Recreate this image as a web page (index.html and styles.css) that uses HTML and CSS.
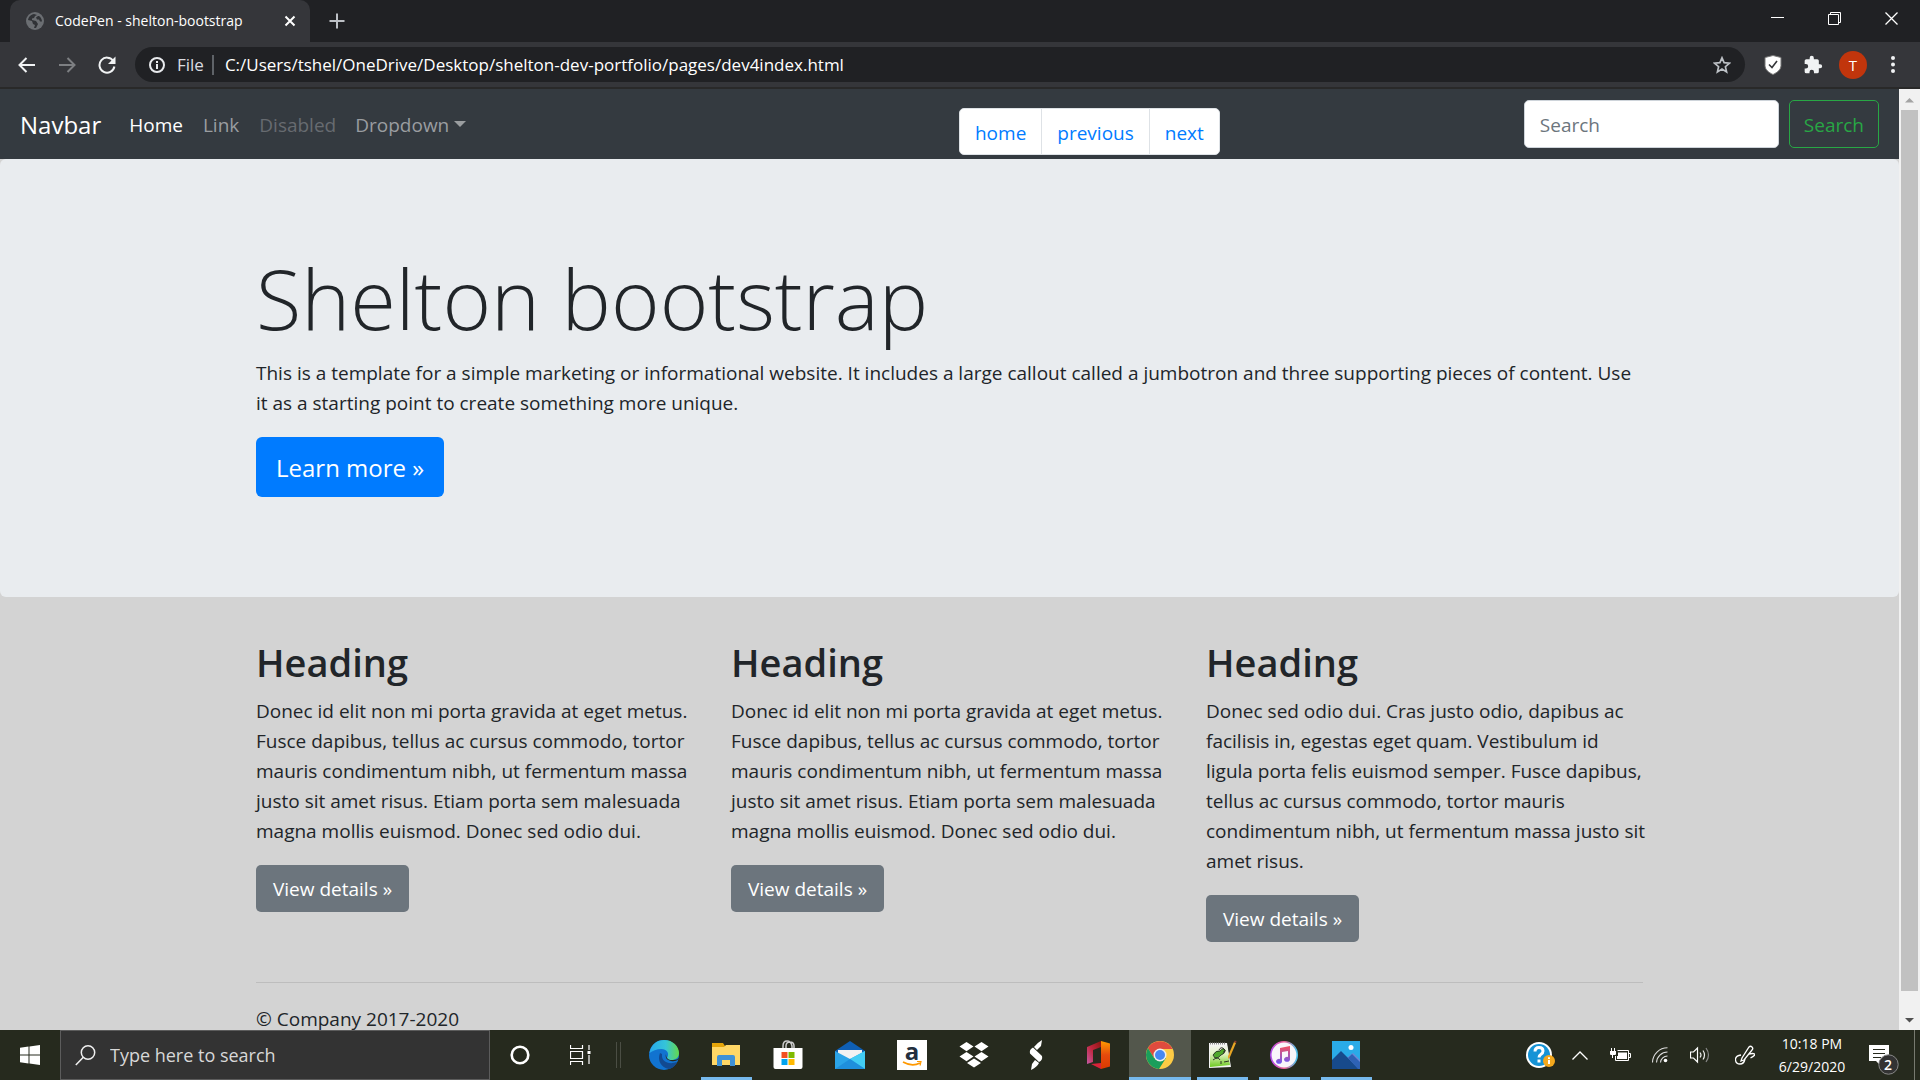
FILE: index.html
```html
<!DOCTYPE html>
<html lang="en">
<head>
<meta charset="utf-8">
<title>CodePen - shelton-bootstrap</title>
<link rel="stylesheet" href="styles.css">
</head>
<body>
<div class="screen">
  <header class="tabstrip">
    <div class="tab">
      <svg class="favicon" viewBox="0 0 18 18"><circle cx="9" cy="9" r="9" fill="#6b6e72"/><path d="M8 2c-3 .3-5.500 3-6 6l4 1 1 3 2 1-1 3 2 0 2-4-2-3-4-1 0-1.500 2-.5 1-2 2-1zM12 4l-2 1.500 1 2 2 0 1 2 2 0c0-2-1.200-4.500-3-5.500z" fill="#303236"/></svg>
      <span class="tab-title">CodePen - shelton-bootstrap</span>
      <button class="icon-btn tab-close" aria-label="Close tab"><svg width="12" height="12" viewBox="0 0 12 12"><path d="M1.500 1.500l9 9m0-9l-9 9" stroke="#fff" stroke-width="2"/></svg></button>
    </div>
    <button class="icon-btn new-tab" aria-label="New tab"><svg width="16" height="16" viewBox="0 0 16 16"><path d="M8 .5v15M.5 8h15" stroke="#bdc1c6" stroke-width="2"/></svg></button>
    <div class="window-controls">
      <button class="icon-btn" aria-label="Minimize"><svg width="13" height="15" viewBox="0 0 13 15"><path d="M0 6.500h13" stroke="#fff"/></svg></button>
      <button class="icon-btn" aria-label="Restore"><svg width="13" height="13" viewBox="0 0 13 13"><path d="M.5 2.500h10v10h-10zM2.500 2.500v-2h10v10h-2" fill="none" stroke="#fff"/></svg></button>
      <button class="icon-btn" aria-label="Close"><svg width="13" height="13" viewBox="0 0 13 13"><path d="M.5 .5l12 12m0-12l-12 12" stroke="#fff" stroke-width="1.300"/></svg></button>
    </div>
  </header>

  <div class="toolbar">
    <button class="icon-btn nav-btn" aria-label="Back"><svg width="18" height="16" viewBox="0 0 18 16"><path d="M17 8H2M8.500 1L1.500 8l7 7" fill="none" stroke="#f1f3f4" stroke-width="2"/></svg></button>
    <button class="icon-btn nav-btn" aria-label="Forward"><svg width="18" height="16" viewBox="0 0 18 16"><path d="M1 8h15M9.500 1l7 7-7 7" fill="none" stroke="#7d7f82" stroke-width="2"/></svg></button>
    <button class="icon-btn nav-btn" aria-label="Reload"><svg width="18" height="18" viewBox="0 0 18 18"><path d="M15.300 5A7.500 7.500 0 1 0 16.400 10.500" fill="none" stroke="#f1f3f4" stroke-width="2"/><path d="M17.500 .5v7.500H10z" fill="#f1f3f4"/></svg></button>
    <div class="omnibox">
      <svg width="16" height="16" viewBox="0 0 16 16"><circle cx="8" cy="8" r="7" fill="none" stroke="#e8eaed" stroke-width="2"/><path d="M8 7v5M8 4v2" stroke="#e8eaed" stroke-width="2"/></svg>
      <span class="scheme">File</span>
      <input class="url" aria-label="Address" value="C:/Users/tshel/OneDrive/Desktop/shelton-dev-portfolio/pages/dev4index.html">
      <svg width="18" height="18" viewBox="0 0 18 18"><path d="M9 1.800l2.100 4.900 5.300.5-4 3.500 1.200 5.200L9 13.100l-4.600 2.800 1.200-5.200-4-3.500 5.300-.5z" fill="none" stroke="#bdc1c6" stroke-width="1.700"/></svg>
    </div>
    <div class="extensions">
      <button class="icon-btn ext" aria-label="Shield extension"><svg width="18" height="20" viewBox="0 0 18 20"><path d="M9 .5l8 2v8c0 4-3.500 7-8 9-4.500-2-8-5-8-9v-8z" fill="#fff" stroke="#777" stroke-width="1"/><path d="M5 9.500l3 3 5-6.500" fill="none" stroke="#35363a" stroke-width="1.600"/></svg></button>
      <button class="icon-btn ext" aria-label="Extensions"><svg width="20" height="20" viewBox="0 0 24 24"><path d="M20.500 11H19V7a2 2 0 0 0-2-2h-4V3.500a2.500 2.500 0 0 0-5 0V5H4a2 2 0 0 0-2 2v3.800h1.500a2.700 2.700 0 0 1 0 5.400H2V20a2 2 0 0 0 2 2h3.800v-1.500a2.700 2.700 0 0 1 5.400 0V22H17a2 2 0 0 0 2-2v-4h1.500a2.500 2.500 0 0 0 0-5z" fill="#f1f3f4"/></svg></button>
      <button class="avatar">T</button>
      <button class="icon-btn ext" aria-label="Menu"><svg width="4" height="17" viewBox="0 0 4 17"><g fill="#f1f3f4"><circle cx="2" cy="2" r="2"/><circle cx="2" cy="8.500" r="2"/><circle cx="2" cy="15" r="2"/></g></svg></button>
    </div>
  </div>

  <div class="viewport">
    <div class="page">
      <nav class="navbar">
        <a class="brand" href="#">Navbar</a>
        <ul class="nav-list">
          <li><a class="nav-link active" href="#">Home</a></li>
          <li><a class="nav-link" href="#">Link</a></li>
          <li><a class="nav-link disabled" href="#">Disabled</a></li>
          <li><a class="nav-link dropdown" href="#">Dropdown</a></li>
        </ul>
        <ul class="pagination">
          <li><a href="#">home</a></li>
          <li><a href="#">previous</a></li>
          <li><a href="#">next</a></li>
        </ul>
        <form class="search-form">
          <input class="search-input" type="text" placeholder="Search" aria-label="Search">
          <button class="search-btn" type="button">Search</button>
        </form>
      </nav>
      <main>
        <section class="jumbotron">
          <div class="container">
            <h1>Shelton bootstrap</h1>
            <p>This is a template for a simple marketing or informational website. It includes a large callout called a jumbotron and three supporting pieces of content. Use it as a starting point to create something more unique.</p>
            <a class="btn btn-primary" href="#">Learn more »</a>
          </div>
        </section>
        <div class="container">
          <div class="row">
            <section class="col">
              <h2>Heading</h2>
              <p>Donec id elit non mi porta gravida at eget metus. Fusce dapibus, tellus ac cursus commodo, tortor mauris condimentum nibh, ut fermentum massa justo sit amet risus. Etiam porta sem malesuada magna mollis euismod. Donec sed odio dui.</p>
              <a class="btn btn-secondary" href="#">View details »</a>
            </section>
            <section class="col">
              <h2>Heading</h2>
              <p>Donec id elit non mi porta gravida at eget metus. Fusce dapibus, tellus ac cursus commodo, tortor mauris condimentum nibh, ut fermentum massa justo sit amet risus. Etiam porta sem malesuada magna mollis euismod. Donec sed odio dui.</p>
              <a class="btn btn-secondary" href="#">View details »</a>
            </section>
            <section class="col">
              <h2>Heading</h2>
              <p>Donec sed odio dui. Cras justo odio, dapibus ac facilisis in, egestas eget quam. Vestibulum id ligula porta felis euismod semper. Fusce dapibus, tellus ac cursus commodo, tortor mauris condimentum nibh, ut fermentum massa justo sit amet risus.</p>
              <a class="btn btn-secondary" href="#">View details »</a>
            </section>
          </div>
          <footer class="footer"><p>© Company 2017-2020</p></footer>
        </div>
      </main>
    </div>
    <div class="scrollbar">
      <svg class="arrow" viewBox="0 0 21 21"><path d="M6 13.500h9L10.500 9z" fill="#a3a3a3"/></svg>
      <div class="track"><div class="thumb"></div></div>
      <svg class="arrow" viewBox="0 0 21 21"><path d="M6 9h9l-4.500 4.500z" fill="#505050"/></svg>
    </div>
  </div>

  <footer class="taskbar">
    <button class="icon-btn start" aria-label="Start"><svg width="20" height="20" viewBox="0 0 20 20"><path d="M0 2.800l8.500-1.200v8H0zM9.500 1.500L20 0v9.600H9.500zM0 10.500h8.500v8L0 17.300zM9.500 10.500H20V20L9.500 18.600z" fill="#fff"/></svg></button>
    <div class="task-search">
      <svg width="21" height="21" viewBox="0 0 21 21"><circle cx="13" cy="7.500" r="6.700" fill="none" stroke="#f0f0f0" stroke-width="1.500"/><path d="M8.300 12.300L.8 20" stroke="#f0f0f0" stroke-width="1.500"/></svg>
      <input type="text" placeholder="Type here to search" aria-label="Type here to search">
    </div>
    <button class="icon-btn sys" aria-label="Cortana"><svg width="20" height="20" viewBox="0 0 20 20"><circle cx="10" cy="10" r="8.300" fill="none" stroke="#fff" stroke-width="2.600"/></svg></button>
    <button class="icon-btn sys" aria-label="Task view"><svg width="21" height="20" viewBox="0 0 21 20"><path d="M.5 0v3.500h12V0M.5 20v-3.500h12V20M.5 6.500h12v7H.5zM19 0v5M19 10v9" fill="none" stroke="#fff" stroke-width="1.200"/><path d="M17.500 6h3v3h-3z" fill="#fff"/></svg></button>
    <span class="divider"></span>
    <div class="apps">
      <button class="app" aria-label="Edge"><svg viewBox="0 0 30 30"><defs><linearGradient id="e1" x1="0" x2="1"><stop stop-color="#27a8ec"/><stop offset=".55" stop-color="#35c4d8"/><stop offset="1" stop-color="#64d94c"/></linearGradient></defs><circle cx="15" cy="15" r="15" fill="#1173d0"/><path d="M.5 13C2 4 8 0 15 0c9 0 15 6.500 15 13 0 5-4 7-7.500 7-3 0-5.500-1-4-3 2-4-1-8-6-8-5 0-9 2-12 4z" fill="url(#e1)"/><path d="M11 13c-3 7 1 15 9 16 4-1 7-4 8-7-8 3-16 0-15-8z" fill="#124a91"/><path d="M17 14c-1 4 1 6 5 7 3 .6 5 .2 8-2v-1c-2 2-4 2-7 2-4 0-6-2-6-6z" fill="#262a1e"/></svg></button>
      <button class="app open" aria-label="File Explorer"><svg viewBox="0 0 30 30"><path d="M1 3h11l2 3h15v19H1z" fill="#e5a50a"/><path d="M1 7h12l2-2h14v20H1z" fill="#ffd766"/><path d="M6 26V17q0-2 2-2h14q2 0 2 2v9h-5v-6h-8v6z" fill="#3f91d6"/></svg></button>
      <button class="app" aria-label="Store"><svg viewBox="0 0 30 30"><path d="M10 9V6q0-5 4-5t5 5v3M13 9V6q0-4 4-4t4 4v3" fill="none" stroke="#ccc" stroke-width="1.500"/><path d="M0.500 8h29v19q0 2-2 2h-25q-2 0-2-2z" fill="#fff"/><path d="M8.500 12h6v6h-6z" fill="#f25022"/><path d="M15.500 12h6v6h-6z" fill="#7fba00"/><path d="M8.500 19h6v6h-6z" fill="#00a4ef"/><path d="M15.500 19h6v6h-6z" fill="#ffb900"/></svg></button>
      <button class="app" aria-label="Mail"><svg viewBox="0 0 30 30"><path d="M0 11L15 1l15 10v8H0z" fill="#0f5fb4"/><path d="M3 10h24v9H3z" fill="#f2f2f2"/><path d="M0 11l15 8 15-8v18H0z" fill="#2ba4e8"/><path d="M15 19L30 11v18z" fill="#42cdf4"/><path d="M0 29h30L15 19z" fill="#1f8fdc"/></svg></button>
      <button class="app amazon" aria-label="Amazon"><b>a</b><svg viewBox="0 0 20 6"><path d="M1 1q9 5 17 1" fill="none" stroke="#f90" stroke-width="1.700"/><path d="M15 .5h4l-1 4" fill="none" stroke="#f90" stroke-width="1.200"/></svg></button>
      <button class="app" aria-label="Dropbox"><svg viewBox="0 0 30 30"><path d="M7.500 2l7 4.600-7 4.600-7-4.600zM22.500 2l7 4.600-7 4.600-7-4.600zM7.500 12l7 4.600-7 4.600-7-4.600zM22.500 12l7 4.600-7 4.600-7-4.600zM15 18.500l7 4.500-7 4.500L8 23z" fill="#fff"/></svg></button>
      <button class="app" aria-label="Stamps"><svg viewBox="0 0 30 30"><path d="M21 0l-1 6-4 4-3-3q3-4 8-7zM12 7.500l9 8.500q1 4-3 6l-9-8.500q-1-4 3-6zM10 30l1-6 3-4 4 3q-2 4-8 7z" fill="#fff"/></svg></button>
      <button class="app" aria-label="Office"><svg viewBox="0 0 30 30"><defs><linearGradient id="o1" x1="1" y1="0" x2="0" y2="1"><stop stop-color="#8c1510"/><stop offset=".5" stop-color="#c2263e"/><stop offset="1" stop-color="#c45aa5"/></linearGradient><linearGradient id="o2" x1="0" y1="0" x2="0" y2="1"><stop stop-color="#ff9a00"/><stop offset=".5" stop-color="#e64a0d"/><stop offset="1" stop-color="#dc3a00"/></linearGradient></defs><path d="M4 7L18 1v6l-8 3v12l-6 2z" fill="url(#o1)"/><path d="M18 1l9 2.500v23L18 29z" fill="url(#o2)"/><path d="M8 24l10-1v6z" fill="#d8233a"/></svg></button>
      <button class="app open current" aria-label="Chrome"><svg viewBox="0 0 30 30"><circle cx="15" cy="15" r="14" fill="#fdcb45"/><path d="M2.900 8A14 14 0 0 1 27.500 9H15L9 18z" fill="#df4b3e"/><path d="M2.900 8A14 14 0 0 0 14 29l7-11-12 0z" fill="#1a9e5b"/><circle cx="15" cy="15" r="6.500" fill="#eee"/><circle cx="15" cy="15" r="5" fill="#4688f1"/></svg></button>
      <button class="app open" aria-label="Notepad++"><svg viewBox="0 0 30 30"><defs><linearGradient id="n1" x1="0" y1="0" x2="0" y2="1"><stop stop-color="#f4f4f4"/><stop offset=".4" stop-color="#e4f4c4"/><stop offset="1" stop-color="#6cc820"/></linearGradient></defs><path d="M2 3h18l4 24-22 1z" fill="#f4f4f4"/><path d="M3 5h17l3 20-20 2z" fill="url(#n1)"/><path d="M6 15q3-5 7-4 3-4 5-1 0 4-4 5-3 4-6 3z" fill="#4fa82b" stroke="#222" stroke-width=".8"/><path d="M12 10q2-4 5-1t-1 3M6 20q5-4 7 0M14 21v3M17 22l5-1" fill="none" stroke="#222" stroke-width=".9"/><path d="M3 3.500h16" stroke="#888" stroke-width="2" stroke-dasharray="1 1"/><path d="M27 2l2 1-6 14-2 2v-3z" fill="#e8a624"/><path d="M27 2l.8-1.500 1.800.8L29 3z" fill="#8a3a30"/></svg></button>
      <button class="app open" aria-label="iTunes"><svg viewBox="0 0 30 30"><defs><linearGradient id="i1" x1="0" x2="1"><stop stop-color="#b24df0"/><stop offset=".5" stop-color="#f06090"/><stop offset="1" stop-color="#49c4f0"/></linearGradient><linearGradient id="i2" x1="0" y1="0" x2="0" y2="1"><stop stop-color="#f5515f"/><stop offset="1" stop-color="#6a5af5"/></linearGradient></defs><circle cx="15" cy="15" r="13.200" fill="#f8f6fa" stroke="url(#i1)" stroke-width="1.600"/><path d="M11 8l10-2v13a3 2.500 0 1 1-2-2V11l-6 1v9a3 2.500 0 1 1-2-2z" fill="url(#i2)"/></svg></button>
      <button class="app open" aria-label="Photos"><svg viewBox="0 0 30 30"><path d="M1 1h28v28H1z" fill="#2aabe8"/><path d="M13 20l9-7 7 7v9H13z" fill="#6f86d6"/><path d="M1 20l9-9 18 18H1z" fill="#174a8c"/><path d="M17 18l4-4 8 8v7h-2z" fill="#2e62b5"/><circle cx="20" cy="7.500" r="2.500" fill="#fff"/></svg></button>
    </div>
    <div class="tray">
      <button class="icon-btn help" aria-label="Help"><svg width="30" height="30" viewBox="0 0 30 30"><circle cx="14" cy="15" r="13" fill="#fff"/><circle cx="14" cy="15" r="11" fill="#1593d6"/><path d="M10 11.500q0-4 4-4t4 3.500q0 2-2 3.200t-2 3.300M14 19.500v3" fill="none" stroke="#fff" stroke-width="3"/><circle cx="24" cy="21" r="6" fill="#f4a81d"/><path d="M24 20v4M24 17.300v1.700" stroke="#fff" stroke-width="2"/></svg></button>
      <button class="icon-btn" aria-label="Hidden icons"><svg width="16" height="9" viewBox="0 0 16 9"><path d="M.5 8.500L8 1l7.500 7.500" fill="none" stroke="#fff" stroke-width="1.300"/></svg></button>
      <button class="icon-btn" aria-label="Battery"><svg width="21" height="14" viewBox="0 0 21 14"><path d="M7.500 2.500h11v10h-13V8M19 5.500h1.500v4H19" fill="none" stroke="#fff"/><path d="M8 4.500h9v6.500H7V8h1z" fill="#fff"/><path d="M1.500 0v3M4.500 0v3M2.500 7v3" fill="none" stroke="#fff"/><path d="M0 3h6v3q0 1-1 1H1q-1 0-1-1z" fill="#fff"/></svg></button>
      <button class="icon-btn" aria-label="Wi-Fi"><svg width="16" height="16" viewBox="0 0 16 16"><g fill="none" stroke="#ddd" stroke-width="1.100"><path d="M.5 15.500A15 15 0 0 1 15.500 .8M4.500 15.500a11 11 0 0 1 11-10.500M8.500 15.500a7 7 0 0 1 7-6.500"/></g><circle cx="13.500" cy="13.500" r="1.800" fill="#fff"/></svg></button>
      <button class="icon-btn" aria-label="Volume"><svg width="20" height="18" viewBox="0 0 20 18"><path d="M.5 6h3l4-4v14l-4-4h-3z" fill="none" stroke="#fff" stroke-width="1.200"/><path d="M10 6.500q2 2.500 0 5M13 4.500q3 4.500 0 9" fill="none" stroke="#eee" stroke-width="1.200"/><path d="M16 2q5 7 0 14" fill="none" stroke="#888" stroke-width="1.200"/></svg></button>
      <button class="icon-btn pen" aria-label="Pen workspace"><svg width="20" height="20" viewBox="0 0 20 20"><path d="M9 15L6 16l1-3 7-11q1.500-1.500 3 0t0 3zM6 10q-6 1-5.500 5T5 19t5-5M14 9q4-1 5.500 0t-4 4" fill="none" stroke="#fff" stroke-width="1.300"/></svg></button>
      <div class="clock"><time>10:18 PM</time><time>6/29/2020</time></div>
      <button class="icon-btn notify" aria-label="Notifications"><svg width="30" height="30" viewBox="0 0 30 30"><path d="M0 0h20v16h-10v3l-3-3H0z" fill="#fff"/><path d="M4 4.500h12M4 8.500h12M4 12.500h8" stroke="#262a1e"/><circle cx="19.500" cy="19.500" r="9.700" fill="#333" stroke="#888"/></svg><span class="badge">2</span></button>
      <span class="peek"></span>
    </div>
  </footer>
</div>
</body>
</html>
```
FILE: styles.css
```css
* { box-sizing: border-box; }
body, h1, h2, p, ul { margin: 0; padding: 0; }
body { font-family: "Open Sans", "Noto Sans", sans-serif; font-size: 19px; line-height: 30px; color: #212529; }
button, input { font: inherit; border: 0; padding: 0; margin: 0; background: none; color: inherit; outline: 0; }
ul { list-style: none; display: flex; }
a { text-decoration: none; color: inherit; }
svg { display: block; flex: none; }
.screen { display: flex; flex-direction: column; height: 100vh; overflow: hidden; }
.icon-btn { display: flex; align-items: center; justify-content: center; flex: none; }

.tabstrip { display: flex; height: 42px; background: #202124; padding-left: 10px; flex: none; }
.tab { display: flex; align-items: center; width: 300px; background: #35363a; border-radius: 10px 10px 0 0; padding: 0 14px 0 16px; color: #fff; font-size: 14px; }
.favicon { width: 18px; height: 18px; }
.tab-title { flex: 1; margin-left: 11px; white-space: nowrap; }
.new-tab { width: 54px; }
.window-controls { display: flex; margin-left: auto; height: 36px; }
.window-controls .icon-btn { width: 57px; }

.toolbar { display: flex; align-items: center; height: 47px; background: #35363a; border-bottom: 2px solid #292929; padding: 0 7px; flex: none; }
.nav-btn { width: 40px; height: 36px; }
.omnibox { display: flex; align-items: center; flex: 1; height: 35px; margin-left: 8px; padding: 0 14px; border-radius: 18px; background: #202124; color: #fff; font-size: 17px; }
.scheme { margin-left: 12px; padding-right: 8px; border-right: 2px solid #5f6368; line-height: 20px; color: #dadce0; }
.url { flex: 1; margin-left: 11px; min-width: 0; }
.extensions { display: flex; align-items: center; margin-left: 8px; }
.ext { width: 40px; }
.avatar { width: 28px; height: 28px; margin: 0 6px; border-radius: 50%; background: #c1350c; color: #fff; font-size: 15px; line-height: 28px; }

.viewport { display: flex; flex: 1; min-height: 0; overflow: hidden; background: #d3d3d3; }
.page { flex: 1; min-width: 0; overflow: hidden; }
.navbar { display: flex; align-items: center; height: 70px; padding: 0 20px; background: #343a40; }
.brand { padding-top: 2px; font-size: 24px; color: #fff; margin-right: 18px; }
.nav-list { padding-top: 2px; }
.nav-link { padding: 0 10px; color: #9a9da0; }
.nav-link.active { color: #fff; }
.nav-link.disabled { color: #676b70; }
.dropdown { padding-left: 9px; }
.dropdown::after { content: ""; display: inline-block; margin-left: 5px; vertical-align: 5px; border: 6px solid transparent; border-top-color: currentColor; border-bottom: 0; }
.pagination { margin: 15px 304px 0 auto; }
.pagination a { display: block; height: 47px; padding: 9px 15px 0; border: 1px solid #dee2e6; margin-left: -1px; background: #fff; color: #007bff; }
.pagination li:first-child a { border-radius: 5px 0 0 5px; }
.pagination li:last-child a { border-radius: 0 5px 5px 0; }
.search-form { display: flex; gap: 10px; }
.search-input { width: 255px; height: 48px; padding: 2px 15px 0; border: 1px solid #ced4da; border-radius: 5px; background: #fff; color: #495057; }
.search-input::placeholder { color: #6c757d; opacity: 1; }
.search-btn { height: 48px; padding: 1px 14px 0; border: 1px solid #28a745; border-radius: 5px; color: #28a745; }

.jumbotron { padding: 85px 0 100px; margin-bottom: 40px; background: #e9ecef; border-radius: 6px; }
.container { max-width: 1425px; margin: 0 auto; padding: 0 19px; }
h1 { font-size: 83px; font-weight: 300; line-height: 108px; margin-bottom: 6px; }
p { margin-bottom: 19px; }
.btn { display: inline-block; color: #fff; border-radius: 5px; }
.btn-primary { padding: 12px 20px 10px; font-size: 24px; line-height: 38px; background: #007bff; border-radius: 6px; }
.btn-secondary { padding: 9px 17px 7px; line-height: 31px; background: #6c757d; }
.row { display: grid; grid-template-columns: repeat(3, 1fr); gap: 38px; }
.col { padding-bottom: 20px; }
.col p { margin-right: -6px; }
h2 { font-size: 38px; font-weight: 600; line-height: 48px; padding-top: 1px; margin-bottom: 10px; }
.footer { margin-top: 20px; padding-top: 21px; border-top: 1px solid #bdbdbd; }

.scrollbar { display: flex; flex-direction: column; width: 21px; background: #f1f1f1; }
.arrow { width: 21px; height: 21px; }
.track { flex: 1; padding: 0 2px; }
.thumb { height: 98%; background: #c1c1c1; }

.taskbar { display: flex; height: 50px; background: #262a1e; color: #fff; flex: none; }
.start { width: 60px; }
.task-search { display: flex; align-items: center; gap: 14px; width: 430px; padding: 0 14px; background: #333; border: 1px solid #5c5c5c; }
.task-search input { flex: 1; min-width: 0; font-size: 18px; }
.task-search input::placeholder { color: #d8d8d8; opacity: 1; }
.sys { width: 60px; }
.divider { width: 5px; height: 26px; margin: 12px 12px 0 6px; border: 1px solid #4b4e44; border-width: 0 1px; }
.apps { display: flex; }
.app { position: relative; display: flex; align-items: center; justify-content: center; width: 62px; }
.app svg { width: 30px; height: 30px; }
.app.open::after { content: ""; position: absolute; left: 6px; right: 5px; bottom: 0; height: 3px; background: #76b9ed; }
.app.current { background: #53574c; }
.app.current::after { left: 0; right: 0; }
.amazon { flex-direction: column; width: 30px; height: 30px; margin: 10px 16px; background: #fff; color: #232f3e; font-size: 24px; line-height: 20px; }
.amazon b { margin-top: -3px; }
.app.amazon svg { width: 20px; height: 6px; }
.tray { display: flex; align-items: center; margin-left: auto; }
.tray .icon-btn { width: 40px; height: 50px; }
.tray .pen { width: 50px; }
.clock { display: flex; flex-direction: column; width: 84px; text-align: center; font-size: 14px; line-height: 23px; }
.tray .notify { position: relative; width: 60px; padding-top: 10px; }
.badge { position: absolute; left: 24px; top: 25px; width: 20px; font-size: 14px; line-height: 20px; font-weight: 600; }
.peek { width: 6px; height: 50px; border-left: 1px solid #777a70; }
```
